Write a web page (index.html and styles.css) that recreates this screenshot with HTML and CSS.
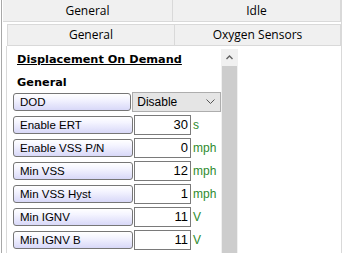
FILE: index.html
```html
<!DOCTYPE html>
<html lang="en">
<head>
<meta charset="UTF-8">
<meta name="viewport" content="width=device-width, initial-scale=1.0">
<title>Displacement On Demand</title>
<link rel="stylesheet" href="styles.css">
</head>
<body>
<div class="outer">
    <div class="tabs top">
        <div class="tab">General</div>
        <div class="tab">Idle</div>
    </div>
    <div class="inner">
        <div class="tabs sub">
            <div class="tab">General</div>
            <div class="tab">Oxygen Sensors</div>
        </div>
        <div class="panel">
            <div class="content">
                <h3 class="title">Displacement On Demand</h3>
                <h4 class="group">General</h4>

                <!-- parameter rows -->
                <div class="row">
                    <div class="label">DOD</div>
                    <div class="select">
                        <span>Disable</span>
                        <svg width="9" height="6" viewBox="0 0 9 6"><path d="M0.5 0.5 L4.5 4.5 L8.5 0.5" fill="none" stroke="#555" stroke-width="1"/></svg>
                    </div>
                </div>
                <div class="row">
                    <div class="label">Enable ERT</div>
                    <div class="value">30</div>
                    <span class="unit">s</span>
                </div>
                <div class="row">
                    <div class="label">Enable VSS P/N</div>
                    <div class="value">0</div>
                    <span class="unit">mph</span>
                </div>
                <div class="row">
                    <div class="label">Min VSS</div>
                    <div class="value">12</div>
                    <span class="unit">mph</span>
                </div>
                <div class="row">
                    <div class="label">Min VSS Hyst</div>
                    <div class="value">1</div>
                    <span class="unit">mph</span>
                </div>
                <div class="row">
                    <div class="label">Min IGNV</div>
                    <div class="value">11</div>
                    <span class="unit">V</span>
                </div>
                <div class="row">
                    <div class="label">Min IGNV B</div>
                    <div class="value">11</div>
                    <span class="unit">V</span>
                </div>
            </div>
            <div class="scrollbar">
                <div class="arrow">
                    <svg width="7" height="5" viewBox="0 0 7 5"><path d="M0.5 4 L3.5 1 L6.5 4" fill="none" stroke="#606060" stroke-width="1.4"/></svg>
                </div>
                <div class="thumb"></div>
            </div>
        </div>
    </div>
</div>
</body>
</html>
```

FILE: styles.css
```css
body {
    margin: 0;
    background: #fff;
    font-family: 'Liberation Sans', Arial, sans-serif;
    font-size: 12px;
    color: #000;
    height: 253px;
    overflow: hidden;
}

.outer {
    margin-left: 1px;
    width: 339px;
    height: 253px;
    border-left: 1px solid #a8a8a8;
    border-right: 1px solid #d9d9d9;
    display: flex;
    flex-direction: column;
}

.tabs {
    display: flex;
    background: #f0f0f0;
}

.tab {
    flex: 1;
    text-align: center;
    border: 1px solid #d9d9d9;
    border-left: none;
    border-top: none;
    font-family: 'Open Sans', sans-serif;
    font-size: 12px;
}

.top {
    height: 22px;
    margin-left: 1px;
}

.top .tab {
    line-height: 21px;
}

.top .tab:first-child {
    flex: 0 0 169px;
}

.inner {
    flex: 1;
    margin-top: 2px;
    margin-left: 4px;
    display: flex;
    flex-direction: column;
}

.sub {
    height: 21px;
    margin-left: 1px;
    border-top: 1px solid #d9d9d9;
    border-left: 1px solid #d9d9d9;
}

.sub .tab {
    line-height: 20px;
}

.sub .tab:first-child {
    flex: 0 0 166px;
}

.panel {
    flex: 1;
    display: flex;
    border-left: 1px solid #d9d9d9;
    padding-top: 3px;
}

.content {
    width: 208px;
    padding-left: 6px;
}

.title {
    margin: 4px 0 0 4px;
    font-family: 'DejaVu Sans', Verdana, sans-serif;
    font-size: 11.3px;
    font-weight: bold;
    text-decoration: underline;
    line-height: 14px;
}

.group {
    margin: 9px 0 2px 4px;
    font-family: 'DejaVu Sans', Verdana, sans-serif;
    font-size: 11.3px;
    font-weight: bold;
    line-height: 14px;
}

.row {
    display: flex;
    align-items: center;
    height: 20px;
    margin-bottom: 3px;
}

.label {
    width: 112px;
    height: 16px;
    line-height: 16px;
    padding-left: 6px;
    border: 1px solid #767676;
    border-radius: 3px;
    background: linear-gradient(to bottom, #ffffff 0%, #f4f4ff 35%, #d8d8f8 100%);
    font-size: 11.5px;
}

.select {
    width: 90px;
    height: 20px;
    margin-left: 1px;
    border: 1px solid #adadad;
    background: #e5e5e5;
    display: flex;
    align-items: center;
    justify-content: space-between;
    padding: 0 5px 0 4px;
    box-sizing: border-box;
}

.value {
    width: 57px;
    height: 20px;
    margin-left: 1px;
    border: 1px solid #7a7a7a;
    background: #fff;
    text-align: right;
    line-height: 18px;
    padding-right: 2px;
    box-sizing: border-box;
    font-size: 13px;
}

.unit {
    margin-left: 2px;
    color: #2e8b2e;
    font-size: 12px;
}

.scrollbar {
    width: 17px;
    background: #f0f0f0;
    display: flex;
    flex-direction: column;
}

.arrow {
    height: 17px;
    display: flex;
    align-items: center;
    justify-content: center;
}

.thumb {
    flex: 1;
    margin: 0 1px;
    background: #cdcdcd;
}
```
